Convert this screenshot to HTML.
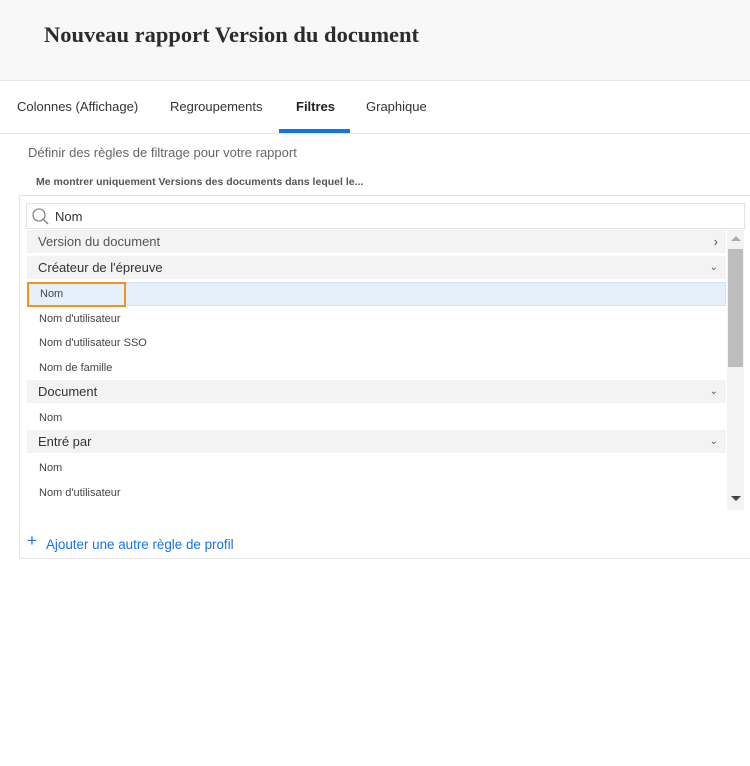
<!DOCTYPE html>
<html><head><meta charset="utf-8"><style>
*{margin:0;padding:0;box-sizing:border-box}
body{width:750px;height:766px;background:#fff;font-family:"Liberation Sans",sans-serif;color:#333;position:relative;overflow:hidden}
.a{position:absolute;white-space:nowrap}
.hdr{left:0;top:0;width:750px;height:81px;background:#f8f8f8;border-bottom:1px solid #e6e6e6}
.title{left:44px;top:22px;font:bold 22.5px "Liberation Serif",serif;color:#2c2c2c}
.tab{top:99px;font-size:13px;color:#333}
.row{left:27px;width:699px;height:24px;font-size:11px;color:#444;padding-left:12px;line-height:26px}
.grp{background:#f3f3f3;font-size:13px;color:#333;padding-left:11px;height:23px;line-height:23px}
.chev{position:absolute;right:8px;top:0;font-size:10px;color:#555}
</style></head><body>
<div class="a hdr"></div>
<div class="a title">Nouveau rapport Version du document</div>
<div class="a tab" style="left:17px">Colonnes (Affichage)</div>
<div class="a tab" style="left:170px">Regroupements</div>
<div class="a tab" style="left:296px;font-weight:bold;color:#222">Filtres</div>
<div class="a tab" style="left:366px">Graphique</div>
<div class="a" style="left:279px;top:129px;width:71px;height:4px;background:#1473e6"></div>
<div class="a" style="left:0;top:133px;width:750px;height:1px;background:#e6e6e6"></div>
<div class="a" style="left:28px;top:145px;font-size:13px;color:#666">Définir des règles de filtrage pour votre rapport</div>
<div class="a" style="left:36px;top:176px;font-size:10.5px;font-weight:bold;color:#555">Me montrer uniquement Versions des documents dans lequel le...</div>
<div class="a" style="left:19px;top:195px;width:740px;height:364px;border:1px solid #e6e6e6"></div>
<div class="a" style="left:26px;top:203px;width:719px;height:26px;border:1px solid #e3e3e3;background:#fff"></div>
<svg class="a" style="left:31px;top:207px" width="19" height="19" viewBox="0 0 19 19"><circle cx="8" cy="8" r="6" fill="none" stroke="#888" stroke-width="1.3"/><path d="M12.5 12.5L17 17" stroke="#888" stroke-width="1.5"/></svg>
<div class="a" style="left:55px;top:209px;font-size:13px;color:#333">Nom</div>
<div class="a row grp" style="top:230px;color:#555">Version du document<span class="chev" style="font-size:13px">›</span></div>
<div class="a row grp" style="top:256px">Créateur de l'épreuve<span class="chev">⌄</span></div>
<div class="a row" style="top:282px;background:#e6f0fa;border:1px solid #d6e3f2;line-height:22px">Nom</div>
<div class="a" style="left:27px;top:282px;width:99px;height:25px;border:2px solid #f0941f"></div>
<div class="a row" style="top:306px">Nom d'utilisateur</div>
<div class="a row" style="top:330px">Nom d'utilisateur SSO</div>
<div class="a row" style="top:355px">Nom de famille</div>
<div class="a row grp" style="top:380px">Document<span class="chev">⌄</span></div>
<div class="a row" style="top:405px">Nom</div>
<div class="a row grp" style="top:430px">Entré par<span class="chev">⌄</span></div>
<div class="a row" style="top:455px">Nom</div>
<div class="a row" style="top:480px">Nom d'utilisateur</div>
<div class="a" style="left:727px;top:230px;width:17px;height:280px;background:#f3f3f3"></div>
<div class="a" style="left:728px;top:249px;width:15px;height:118px;background:#bdbdbd"></div>
<div class="a" style="left:731px;top:236px;width:0;height:0;border-left:5px solid transparent;border-right:5px solid transparent;border-bottom:5px solid #aaa"></div>
<div class="a" style="left:731px;top:496px;width:0;height:0;border-left:5px solid transparent;border-right:5px solid transparent;border-top:5px solid #444"></div>
<div class="a" style="left:27px;top:531px;font-size:17px;color:#1473e6">+</div>
<div class="a" style="left:46px;top:537px;font-size:13.4px;color:#1473e6">Ajouter une autre règle de profil</div>
</body></html>
